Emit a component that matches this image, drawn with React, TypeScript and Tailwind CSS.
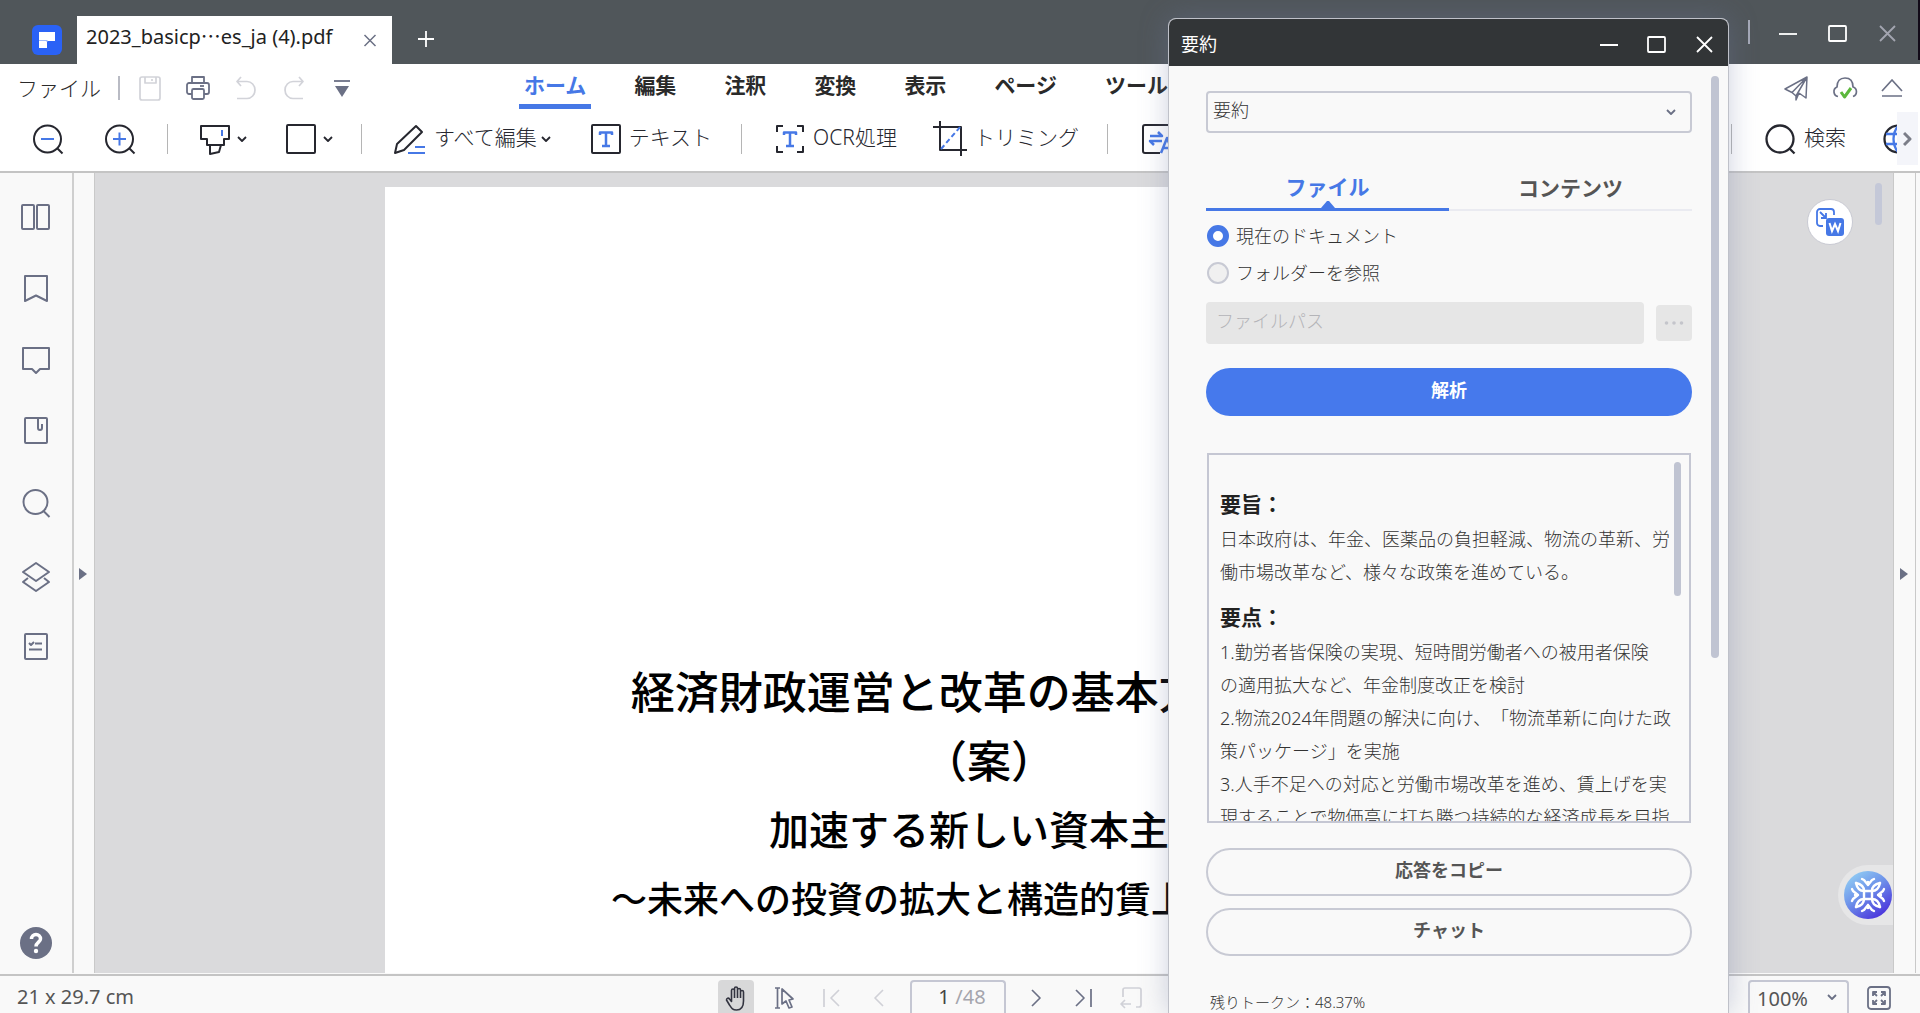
import type { ReactNode } from "react";
import { useState } from "react";

type IconProps = { w?: number; h?: number; sw?: number; className?: string; children: ReactNode };

function Icon({ w = 32, h = 32, sw = 2, className = "", children }: IconProps) {
  return (
    <svg width={w} height={h} viewBox={`0 0 ${w} ${h}`} fill="none" stroke="currentColor" strokeWidth={sw} strokeLinejoin="round" className={`shrink-0 ${className}`} aria-hidden="true">
      {children}
    </svg>
  );
}

const BLUE = "#4678e6";

function Chevron({ className = "" }: { className?: string }) {
  return (
    <Icon w={10} h={8} sw={1.800} className={className}>
      <path d="M1 2l4 4 4-4" />
    </Icon>
  );
}

function WindowButtons({ closeClass }: { closeClass: string }) {
  return (
    <>
      <button aria-label="最小化"><Icon w={20} h={20} sw={1.800}><path d="M1 11h18" /></Icon></button>
      <button aria-label="最大化"><Icon w={20} h={20} sw={1.800}><rect x="1" y="3" width="17" height="15" rx="1" /></Icon></button>
      <button aria-label="閉じる" className={closeClass}><Icon w={20} h={20} sw={1.800}><path d="M2 3l15 15M17 3L2 18" /></Icon></button>
    </>
  );
}

function TitleBar() {
  return (
    <header className="flex h-16 shrink-0 items-end bg-[#50565a] pl-[32px]">
      <svg width="30" height="30" viewBox="0 0 30 30" className="mb-[9px] mr-[15px] shrink-0" aria-hidden="true">
        <rect width="30" height="30" rx="6" fill="#2a62f6" />
        <path d="M7 7h16v9h-8v7H7z" fill="#fff" />
        <path d="M7 15.500h8M15 15v2" stroke="#9db8fa" />
      </svg>
      <div className="flex h-12 w-[315px] items-center justify-between bg-white pl-[9px] pr-[15px] text-xl text-[#222]">
        <span className="whitespace-nowrap pb-2">
          2023_basicp<span className="font-['Noto_Sans_CJK_JP',sans-serif]">…</span>es_ja (4).pdf
        </span>
        <button aria-label="タブを閉じる" className="text-[#6b7085]"><Icon w={14} h={14} sw={1.5}><path d="M1.500 2l11 11M12.500 2l-11 11" /></Icon></button>
      </div>
      <button aria-label="新しいタブ" className="mb-4 ml-[25px] text-white"><Icon w={18} h={18} sw={1.800}><path d="M9 1v16M1 9h16" /></Icon></button>
      <div className="ml-auto flex h-full items-start text-white">
        <span className="mt-5 h-6 w-[2px] bg-[#a5a9b8]" />
        <div className="mr-[20px] mt-[23px] flex gap-[30px] pl-[28px]">
          <WindowButtons closeClass="text-[#a3a5b0]" />
        </div>
        <span className="h-[60px] w-[2px] bg-[#120a18]" />
      </div>
    </header>
  );
}

const menus = ["編集", "注釈", "変換", "表示", "ページ", "ツール"];

function MenuRow() {
  return (
    <div className="flex h-[48px] items-center pl-[17px] pr-[16px] text-[21px] leading-[28px] text-[#2a2a2a]">
      <button className="font-light">ファイル</button>
      <span className="ml-[17px] h-6 w-[2px] bg-[#b9bbc4]" />
      <div className="ml-[17px] flex items-center gap-[22px] text-[#6b7085]">
        <button aria-label="保存" className="text-[#d2d3d9]">
          <Icon w={26} h={26} sw={1.700}><rect x="3" y="2" width="20" height="23" rx="2" /><path d="M8 2v6h11V2M15 4v2" /></Icon>
        </button>
        <button aria-label="印刷">
          <Icon w={26} h={26} sw={1.800}>
            <path d="M7 8V2h12v6M7 19H4a2 2 0 01-2-2v-7a2 2 0 012-2h18a2 2 0 012 2v7a2 2 0 01-2 2h-3" />
            <rect x="7" y="14" width="12" height="10" rx="1.500" /><path d="M15 11h4" />
          </Icon>
        </button>
        <button aria-label="元に戻す" className="text-[#d2d3d9]">
          <Icon w={26} h={26} sw={1.700}><path d="M8 2L4 6.500 8 11M4 6.500h10a8 8.500 0 010 17H4" /></Icon>
        </button>
        <button aria-label="やり直し" className="text-[#d2d3d9]">
          <Icon w={26} h={26} sw={1.700}><path d="M18 2l4 4.500L18 11M22 6.500H12a8 8.500 0 000 17h10" /></Icon>
        </button>
        <button aria-label="カスタマイズ">
          <Icon w={26} h={26} sw={1.800}><path d="M5 6h16" /><path d="M6 11h14l-7 11z" fill="currentColor" stroke="none" /></Icon>
        </button>
      </div>
      <nav className="ml-[164px] flex items-stretch gap-[38px] font-bold">
        <button className="relative px-[5px] pb-[6px] text-[#4678e6]">
          ホーム
          <span className="absolute -bottom-1 left-0 h-[5px] w-full bg-[#4678e6]" />
        </button>
        {menus.map((m) => (
          <button key={m} className="whitespace-nowrap px-[5px] pb-[6px]">{m}</button>
        ))}
      </nav>
      <div className="ml-auto flex items-center gap-[22px] text-[#6b7085]">
        <button aria-label="送信"><Icon w={26} h={26} sw={1.500}><path d="M23 2L1 14l7 3.500L23 2l-1 21-7-5M8 17.500l4 3.500L23 2M12 21v4l3-7" /></Icon></button>
        <button aria-label="クラウド">
          <Icon w={26} h={26} sw={1.700}>
            <path d="M6 21.500a5 5 0 01-1-9.500C5 6 8 3 13 3s8 3 8 9a5 5 0 010 9.500" />
            <path d="M9 17l3.500 5L19 13" stroke="#5cb83c" strokeWidth="3" />
          </Icon>
        </button>
        <button aria-label="リボンを閉じる"><Icon w={24} h={26} sw={1.700}><path d="M2 16L12 5l10 11M2 21h20" /></Icon></button>
      </div>
    </div>
  );
}

function Divider() {
  return <span className="h-[30px] w-[1px] shrink-0 bg-[#b5b5b5]" />;
}

function ToolRow() {
  return (
    <div className="flex h-[59px] items-center overflow-hidden pb-[6px] pl-[32px] text-[21px] font-light leading-[28px] text-[#26272f]">
      <div className="flex items-center gap-[40px]">
        <button aria-label="縮小"><Icon><circle cx="15.500" cy="16" r="13.500" /><path d="M25.500 25.500l5 5" /><path d="M9 16h13" stroke={BLUE} /></Icon></button>
        <button aria-label="拡大"><Icon><circle cx="15.500" cy="16" r="13.500" /><path d="M25.500 25.500l5 5" /><path d="M9 16h13M15.500 9.500v13" stroke={BLUE} /></Icon></button>
      </div>
      <div className="flex items-center pl-[31px]">
        <Divider />
        <button aria-label="ハイライト" className="ml-[31px] flex items-center gap-[6px]">
          <Icon><path d="M2 3h28v13h-5v6H8v-6H2zM11 22v9l9-2 2-7" /><path d="M23 7v6" stroke={BLUE} /></Icon>
          <Chevron />
        </button>
        <button aria-label="図形" className="ml-[38px] flex items-center gap-[6px]">
          <Icon><rect x="2" y="2" width="28" height="28" rx="1" /></Icon>
          <Chevron />
        </button>
      </div>
      <div className="flex items-center pl-[28px]">
        <Divider />
        <button className="ml-[31px] flex items-center whitespace-nowrap">
          <Icon w={34} className="mr-[7px]">
            <path d="M2 30l2-9L23 3l6 6-18 18z" />
            <path d="M22 24h10M15 30h17" stroke={BLUE} />
          </Icon>
          <span className="pb-1">すべて編集</span>
          <Chevron className="ml-1" />
        </button>
        <button className="ml-[39px] flex items-center gap-[7px] whitespace-nowrap">
          <Icon><rect x="2" y="2" width="28" height="28" rx="1" /><path d="M10 12V9.500h12V12M16 9.500V23M12 23h8" stroke={BLUE} strokeWidth="2.500" /></Icon>
          <span className="pb-1">テキスト</span>
        </button>
      </div>
      <div className="flex items-center pl-[29px]">
        <Divider />
        <button className="ml-[32px] flex items-center gap-[7px] whitespace-nowrap">
          <Icon><path d="M3 9V3h6M23 3h6v6M29 23v6h-6M9 29H3v-6" /><path d="M10 12V9.500h12V12M16 9.500V23M12 23h8" stroke={BLUE} strokeWidth="2.500" /></Icon>
          <span className="pb-1">OCR処理</span>
        </button>
        <button className="ml-[36px] flex items-center gap-[7px] whitespace-nowrap">
          <Icon w={34} h={36}><path d="M7 0v29h27M0 6h28v29" /><path d="M8 28L28 5" stroke={BLUE} strokeDasharray="5 3" /></Icon>
          <span className="pb-1">トリミング</span>
        </button>
      </div>
      <div className="flex items-center pl-[28px]">
        <Divider />
        <button aria-label="翻訳" className="ml-[33px]">
          <Icon w={40}>
            <path d="M19 30H4a2 2 0 01-2-2V4a2 2 0 012-2h24" />
            <path d="M9 13h12l-4-4M21 18H9l4 4M20 30l6-15 6 15M22 25h8" stroke={BLUE} strokeWidth="2.500" />
          </Icon>
        </button>
      </div>
      <div className="ml-auto flex items-center">
        <Divider />
        <button className="ml-[33px] flex items-center gap-[7px] whitespace-nowrap">
          <Icon sw={2.300}><circle cx="15" cy="16" r="13.500" /><path d="M24.500 25.500l5 5" /></Icon>
          <span className="pb-1">検索</span>
        </button>
        <button aria-label="ウェブ" className="ml-[37px]">
          <Icon w={14} sw={2.300}>
            <path d="M15 2.500a13.500 13.500 0 000 27" />
            <path d="M3 11h12M3 21h12M15 3c-6 7-6 19 0 26" stroke={BLUE} />
          </Icon>
        </button>
        <button aria-label="次のツール" className="mr-[2px] flex h-[53px] w-[21px] items-center justify-center bg-[#f4f5fa] text-[#7b7d88]">
          <Icon w={10} h={18} sw={3}><path d="M1 3l6 6-6 6" /></Icon>
        </button>
      </div>
    </div>
  );
}

function Sidebar() {
  const buttons: [string, ReactNode][] = [
    ["サムネイル", <><rect x="2" y="4" width="12" height="24" rx="1" /><rect x="17" y="4" width="12" height="24" rx="1" /></>],
    ["ブックマーク", <path d="M5 3h22v25l-11-5.500L5 28z" />],
    ["コメント", <path d="M3 4h26v21h-9l-4 4-4-4H3z" />],
    ["添付", <><rect x="5" y="2" width="22" height="25" rx="1" /><path d="M18 3v9a2 2 0 004 0V8" /></>],
    ["検索", <><circle cx="15.500" cy="15" r="12" /><path d="M23.500 24l6 6" /></>],
    ["レイヤー", <path d="M16 4l13 9-13 9-13-9zM8 19l-5 4 13 9 13-9-5-4" />],
    ["フィールド", <><rect x="5" y="4" width="22" height="25" rx="1" /><path d="M9 13l2 2 3-3M15 13.500h7M9 19.500h13" /></>],
  ];
  return (
    <aside className="flex w-[74px] shrink-0 flex-col items-center justify-between border-r-2 border-[#cfcfcf] bg-[#f9f9f9] pb-[14px] pt-[28px] text-[#6b7085]">
      <div className="flex h-[461px] flex-col justify-between">
        {buttons.map(([label, shape]) => (
          <button key={label} aria-label={label}><Icon className="overflow-visible">{shape}</Icon></button>
        ))}
      </div>
      <button aria-label="ヘルプ" className="text-white">
        <Icon sw={3.500}>
          <circle cx="16" cy="16" r="16" fill="#6b7085" stroke="none" />
          <path d="M11.500 12a4.500 4.500 0 119 0c0 3-4.500 3.500-4.500 7.500" /><circle cx="16" cy="24" r="2.200" fill="#fff" stroke="none" />
        </Icon>
      </button>
    </aside>
  );
}

function PanelToggle({ label, className }: { label: string; className: string }) {
  return (
    <button aria-label={label} className={`flex shrink-0 items-center justify-center bg-[#f9f9f9] pr-[2px] pt-[2px] text-[#6b7085] ${className}`}>
      <svg width="8" height="12" viewBox="0 0 8 12" fill="currentColor" aria-hidden="true"><path d="M0 0l8 6-8 6z" /></svg>
    </button>
  );
}

function AiIcon() {
  return (
    <svg width="48" height="48" viewBox="0 0 48 48" aria-hidden="true">
      <defs>
        <linearGradient id="ai" x1="0" y1="0" x2="0.700" y2="1">
          <stop offset="0" stopColor="#9adcf6" /><stop offset="0.500" stopColor="#6f94ea" /><stop offset="1" stopColor="#4a34dc" />
        </linearGradient>
      </defs>
      <circle cx="24" cy="24" r="24" fill="url(#ai)" />
      {[0, 90, 180, 270].map((a) => (
        <g key={a} transform={`rotate(${a} 24 24)`} fill="none" stroke="#fff" strokeWidth="2.400" strokeLinecap="round" strokeLinejoin="round">
          <path d="M18 8l2 1 4 5 4-5 2-1M24 14v-3" />
          <path d="M12 12c1 5 4 8 8 8h8c4 0 7-3 8-8" />
        </g>
      ))}
    </svg>
  );
}

function Viewer() {
  return (
    <main className="relative flex min-w-0 flex-1 justify-start overflow-hidden bg-[#dadadc] pl-[290px] pt-[14px]">
      <article className="w-[1208px] bg-white pt-[469px] text-center font-['Noto_Sans_CJK_JP',sans-serif] font-medium leading-[69px] text-black">
        <h1 className="text-[44px]">経済財政運営と改革の基本方針2023</h1>
        <p className="text-[44px]">（案）</p>
        <p className="text-[40px]">加速する新しい資本主義</p>
        <p className="text-[36px]">～未来への投資の拡大と構造的賃上げの実現～</p>
      </article>
      <button aria-label="Wordに変換" className="absolute right-[40px] top-[26px] flex size-[46px] items-center justify-center rounded-full border border-[#c9cad3] bg-white">
        <svg width="30" height="30" viewBox="0 0 30 30" fill="none" stroke={BLUE} strokeWidth="1.800" aria-hidden="true">
          <path d="M8 19H5a3 3 0 01-3-3V5a3 3 0 013-3h11a3 3 0 013 3v3M5 5l6 6M11 6v5H6" />
          <rect x="11" y="11" width="18" height="18" rx="3" fill={BLUE} stroke="none" />
          <path d="M14.500 16l2.500 8 3-7 3 7 2.500-8" stroke="#fff" strokeWidth="2" />
        </svg>
      </button>
      <span className="absolute right-[11px] top-[10px] h-[42px] w-[7px] rounded bg-[#c4c8d8]" />
      <button aria-label="AIアシスタント" className="absolute bottom-[48px] right-0 rounded-l-full bg-[#e6e6e7] py-[6px] pl-[6px] pr-[1px]">
        <AiIcon />
      </button>
    </main>
  );
}

function StatusBar() {
  return (
    <footer className="flex h-[39px] shrink-0 items-start overflow-hidden border-t-2 border-[#c4c4c4] bg-[#f9f9f9] pl-[17px] pr-[24px] pt-[4px] text-xl leading-[34px] text-[#555]">
      <span className="w-[701px] shrink-0">21 x 29.7 cm</span>
      <div className="flex items-center text-[#6b7085]">
        <button aria-label="手のひら" className="flex h-[36px] w-[36px] items-center justify-center rounded-t-sm bg-[#d8d8d9] text-[#333440]">
          <Icon w={24} h={26} sw={1.600}>
            <path d="M7.500 14V5.500a1.500 1.500 0 013 0V3.500a1.500 1.500 0 013 0v1.500a1.500 1.500 0 013 0v2a1.500 1.500 0 013 0V16c0 5-2 9-7 9-4 0-5-2-7-5l-3-5c0-2 2-2.500 3-1l2 2.500V12M10.500 5.500V13M13.500 5V13M16.500 7v6" />
          </Icon>
        </button>
        <button aria-label="選択" className="ml-[19px]"><Icon w={24} h={24} sw={1.700}><path d="M2 2h5M4.500 2v20M2 22h5M9 3v15l4-3 3 7 3-1-3-7 4-1z" /></Icon></button>
        <button aria-label="最初のページ" className="ml-[25px] text-[#d0d1d7]"><Icon w={20} h={20} sw={1.700}><path d="M2 1v18M17 2l-8 8 8 8" /></Icon></button>
        <button aria-label="前のページ" className="ml-[26px] text-[#d0d1d7]"><Icon w={20} h={20} sw={1.700}><path d="M15 2l-8 8 8 8" /></Icon></button>
        <label className="ml-[22px] flex h-[36px] w-[96px] items-center justify-center gap-[4px] rounded-t border-2 border-b-0 border-[#c5c7d3] pb-1 pl-2">
          <input aria-label="ページ番号" defaultValue="1" className="w-[13px] bg-transparent text-[#444] outline-none" />
          <span className="text-[#a5a5ad]">/48</span>
        </label>
        <button aria-label="次のページ" className="ml-[20px]"><Icon w={20} h={20} sw={1.700}><path d="M6 2l8 8-8 8" /></Icon></button>
        <button aria-label="最後のページ" className="ml-[27px]"><Icon w={20} h={20} sw={1.700}><path d="M3 2l8 8-8 8M18 1v18" /></Icon></button>
        <button aria-label="回転" className="ml-[26px] text-[#d0d1d7]"><Icon w={24} h={24} sw={1.700}><path d="M4 11V4a2 2 0 012-2h14a2 2 0 012 2v15a2 2 0 01-2 2h-3M12 18H2M6 14l-4 4 4 4" /></Icon></button>
      </div>
      <div className="ml-auto flex items-center gap-[18px] text-[#6b7085]">
        <div className="relative">
          <select aria-label="ズーム" className="block h-[36px] w-[101px] appearance-none rounded-t border-2 border-b-0 border-[#c5c7d3] bg-transparent pb-1 pl-[7px] text-[#555]" defaultValue="100%">
            <option>100%</option>
            <option>150%</option>
          </select>
          <Chevron className="pointer-events-none absolute right-[12px] top-[13px]" />
        </div>
        <button aria-label="全画面" className="pr-[5px]">
          <Icon w={24} h={24} sw={1.800}>
            <rect x="1" y="1" width="22" height="22" rx="3" />
            <path d="M6 10V6h4M6 6l4 4M14 6h4v4M18 6l-4 4M6 14v4h4M6 18l4-4M18 14v4h-4M18 18l-4-4" />
          </Icon>
        </button>
      </div>
    </footer>
  );
}

function SummaryDialog() {
  const [source, setSource] = useState("current");
  return (
    <section aria-label="要約" className="absolute bottom-0 right-[191px] top-[18px] flex w-[561px] flex-col overflow-hidden rounded-t-lg border border-b-0 border-[#bfc1c9] bg-[#f9f9f9] text-[18px] font-light leading-[24px] text-[#333] shadow-[0_0_28px_rgba(110,120,160,0.35)]">
      <div className="flex h-[47px] shrink-0 items-center justify-between bg-[#323537] pl-[12px] pr-[13px] pt-[2px] font-normal text-white">
        <span>要約</span>
        <div className="flex gap-[28px]">
          <WindowButtons closeClass="" />
        </div>
      </div>
      <div className="flex min-h-0 flex-1 items-start overflow-hidden">
        <div className="min-w-0 flex-1 pl-[37px] pr-[19px] pt-[25px]">
          <div className="relative">
            <select aria-label="機能" defaultValue="要約" className="h-[42px] w-full appearance-none rounded-sm border-2 border-[#c8cad4] bg-transparent pb-1 pl-[5px] outline-none">
              <option>要約</option>
              <option>翻訳</option>
            </select>
            <Chevron className="pointer-events-none absolute right-[16px] top-[17px] text-[#6b7085]" />
          </div>
          <div role="tablist" className="mt-[40px] grid grid-cols-2 text-[21px] font-bold leading-[28px] text-[#555]">
            <button role="tab" aria-selected="true" className="relative h-[38px] border-b-[3px] border-[#4678e6] pb-[7px] text-[#4678e6]">
              ファイル
              <svg width="14" height="7" viewBox="0 0 14 7" className="absolute bottom-0 left-1/2 -translate-x-1/2" aria-hidden="true"><path d="M0 7l6-7h2l6 7z" fill={BLUE} /></svg>
            </button>
            <button role="tab" aria-selected="false" className="h-[38px] border-b-2 border-[#eaebf1] pb-[7px]">コンテンツ</button>
          </div>
          <div className="ml-[1px] mt-[13px] space-y-[13px]">
            {[["current", "現在のドキュメント"], ["folder", "フォルダーを参照"]].map(([value, label]) => (
              <label key={value} className="flex items-center gap-[7px]">
                <input type="radio" name="source" checked={source === value} onChange={() => setSource(value)}
                  className="size-[22px] appearance-none rounded-full border-2 border-[#c8cad4] bg-[#f0f0f0] checked:border-[6px] checked:border-[#4678e6] checked:bg-white" />
                <span>{label}</span>
              </label>
            ))}
          </div>
          <div className="mt-[17px] flex items-center gap-[12px]">
            <input aria-label="ファイルパス" placeholder="ファイルパス" disabled className="h-[42px] min-w-0 flex-1 rounded-sm bg-[#e6e6e6] pb-1 pl-[10px] placeholder:text-[#b4b4b8]" />
            <button aria-label="参照" disabled className="flex size-[36px] items-center justify-center rounded-sm bg-[#e6e6e6]">
              <svg width="20" height="4" viewBox="0 0 20 4" fill="#c4c5cb" aria-hidden="true"><circle cx="2.500" cy="2" r="1.800" /><circle cx="10" cy="2" r="1.800" /><circle cx="17.500" cy="2" r="1.800" /></svg>
            </button>
          </div>
          <button className="mt-[24px] h-[48px] w-full rounded-full bg-[#4679ec] pb-1 font-bold text-white">解析</button>
          <div className="relative mx-[1px] mt-[37px] h-[370px] overflow-hidden whitespace-nowrap border-2 border-[#c5c7d3] pl-[11px] pt-[30px] leading-[33px] [text-spacing-trim:space-all]">
            <h2 className="text-[21px] font-bold leading-[38px] text-[#222]">要旨：</h2>
            <p>日本政府は、年金、医薬品の負担軽減、物流の革新、労<br />働市場改革など、様々な政策を進めている。</p>
            <h2 className="mt-[9px] text-[21px] font-bold leading-[38px] text-[#222]">要点：</h2>
            <p>1.勤労者皆保険の実現、短時間労働者への被用者保険<br />の適用拡大など、年金制度改正を検討</p>
            <p>2.物流2024年問題の解決に向け、「物流革新に向けた政<br />策パッケージ」を実施</p>
            <p>3.人手不足への対応と労働市場改革を進め、賃上げを実<br />現することで物価高に打ち勝つ持続的な経済成長を目指</p>
            <span className="absolute right-[8px] top-[7px] h-[134px] w-[7px] rounded bg-[#c0c4d2]" />
          </div>
          <div className="mt-[25px] space-y-[12px] font-bold text-[#555]">
            <button className="block h-[48px] w-full rounded-full border-2 border-[#c8cad4] pb-1">応答をコピー</button>
            <button className="block h-[48px] w-full rounded-full border-2 border-[#c8cad4] pb-1">チャット</button>
          </div>
          <p className="ml-[4px] mt-[34px] text-[15px]">残りトークン：48.37%</p>
        </div>
        <span className="mr-[9px] mt-[10px] h-[582px] w-[8px] shrink-0 rounded bg-[#c0c4d2]" />
      </div>
    </section>
  );
}

export default function App() {
  return (
    <div lang="ja" className="relative flex h-screen flex-col overflow-hidden bg-white font-['Noto_Sans','Noto_Sans_CJK_JP',sans-serif]">
      <TitleBar />
      <div className="shrink-0 border-b-2 border-[#c4c4c4] bg-white">
        <MenuRow />
        <ToolRow />
      </div>
      <div className="flex min-h-0 flex-1 bg-[#f9f9f9] pb-[1px] pr-1">
        <Sidebar />
        <PanelToggle label="左パネルを開く" className="w-[21px] border-r border-[#c9c9c9]" />
        <Viewer />
        <PanelToggle label="右パネルを開く" className="w-[23px] border-x border-[#c9c9c9]" />
      </div>
      <StatusBar />
      <SummaryDialog />
    </div>
  );
}
